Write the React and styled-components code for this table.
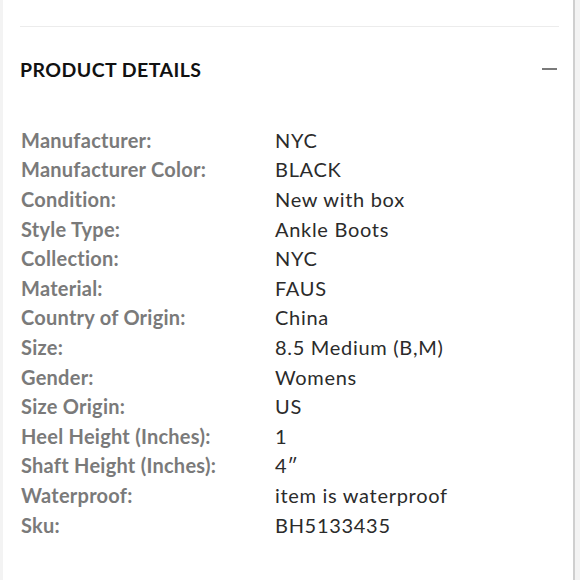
import React from "react";
import styled, { createGlobalStyle } from "styled-components";

const Global = createGlobalStyle`
  html, body { margin: 0; padding: 0; background: #ffffff; }
  body { font-family: "Lato", "Noto Sans", sans-serif; }
`;

const Page = styled.div`
  width: 580px;
  height: 580px;
  display: flex;
  background: #f3f3f3;
  overflow: hidden;
`;

const Panel = styled.div`
  margin-left: 3px;
  width: 572px;
  height: 100%;
  background: #ffffff;
  border-right: 2px solid #cfcfcf;
  box-sizing: border-box;
  padding: 26px 14px 0 17px;
`;

const Divider = styled.hr`
  margin: 0;
  border: 0;
  border-top: 1px solid #ececec;
`;

const Header = styled.div`
  display: flex;
  align-items: center;
  justify-content: space-between;
  height: 84px;
  padding-left: 0;
`;

const Title = styled.h2`
  margin: 0;
  font-size: 19.5px;
  font-weight: 700;
  color: #111111;
  letter-spacing: 0.45px;
`;

const Collapse = styled.span`
  width: 15px;
  height: 2px;
  background: #7a7a7a;
  margin-right: 2px;
`;

const List = styled.dl`
  margin: 14px 0 0 0;
  padding-left: 1px;
  display: grid;
  grid-template-columns: 254px 1fr;
  grid-auto-rows: 29.6px;
  align-items: center;
  font-size: 20px;
`;

const Label = styled.dt`
  margin: 0;
  font-weight: 700;
  color: #7a7a7a;
  letter-spacing: 0.25px;
`;

const Value = styled.dd`
  margin: 0;
  font-weight: 400;
  color: #2b2b2b;
  letter-spacing: 0.7px;
`;

const details = [
  ["Manufacturer:", "NYC"],
  ["Manufacturer Color:", "BLACK"],
  ["Condition:", "New with box"],
  ["Style Type:", "Ankle Boots"],
  ["Collection:", "NYC"],
  ["Material:", "FAUS"],
  ["Country of Origin:", "China"],
  ["Size:", "8.5 Medium (B,M)"],
  ["Gender:", "Womens"],
  ["Size Origin:", "US"],
  ["Heel Height (Inches):", "1"],
  ["Shaft Height (Inches):", "4\u2033"],
  ["Waterproof:", "item is waterproof"],
  ["Sku:", "BH5133435"],
];

export default function App() {
  return (
    <Page>
      <Global />
      <Panel>
        <Divider />
        <Header>
          <Title>PRODUCT DETAILS</Title>
          <Collapse aria-label="collapse" />
        </Header>
        <List>
          {details.map(([k, v]) => (
            <React.Fragment key={k}>
              <Label>{k}</Label>
              <Value>{v}</Value>
            </React.Fragment>
          ))}
        </List>
      </Panel>
    </Page>
  );
}
